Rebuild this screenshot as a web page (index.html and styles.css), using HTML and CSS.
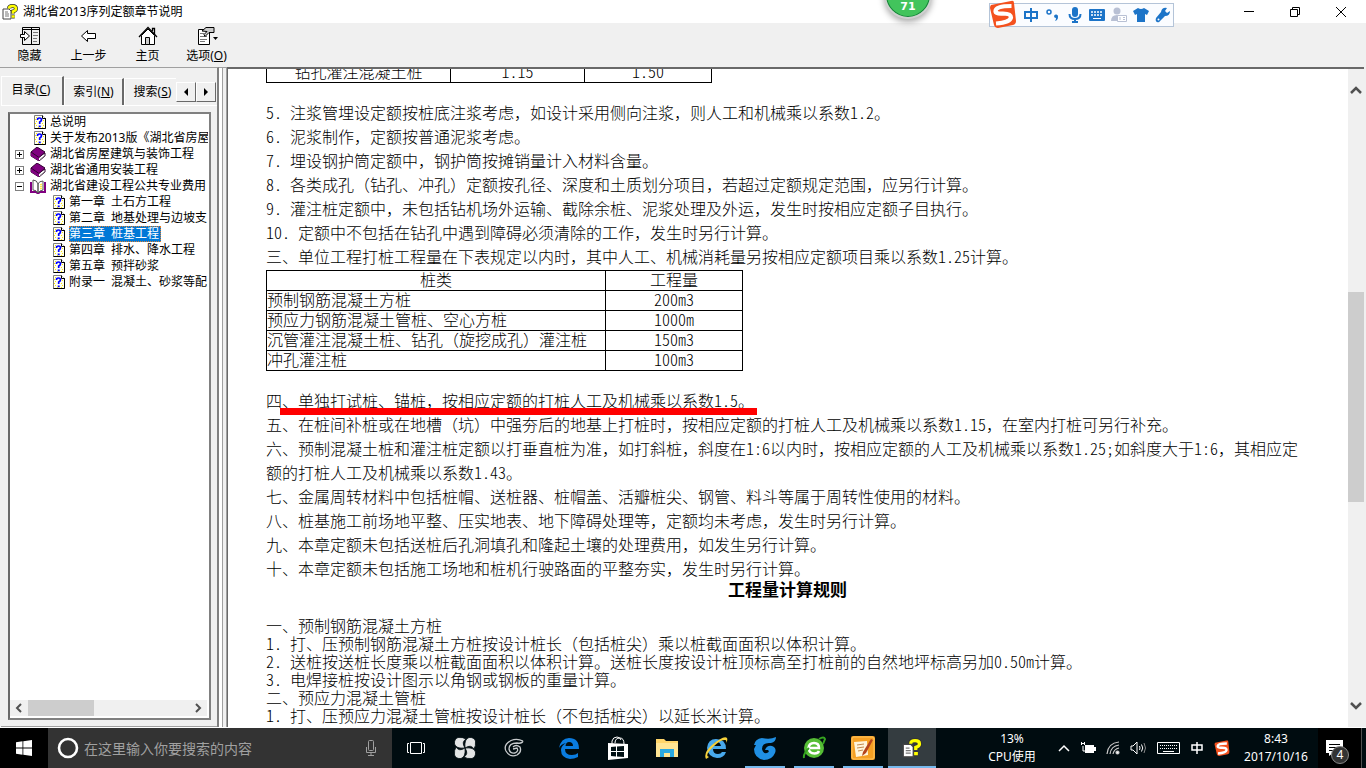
FILE: index.html
```html
<!DOCTYPE html>
<html lang="zh-CN">
<head>
<meta charset="utf-8">
<title>湖北省2013序列定额章节说明</title>
<link rel="stylesheet" href="styles.css">
</head>
<body>
<svg class="defs" aria-hidden="true">
  <symbol id="topic" viewBox="0 0 12 14">
    <path d="M0.5 0.5h8l3 3v10h-11z" fill="#fffff0" stroke="#808080"/>
    <path d="M11.5 3v10.500h-11" fill="none" stroke="#000"/>
    <path d="M8.500 0.500v3h3" fill="#fff" stroke="#000"/>
    <path d="M2 2.500h1M1 4.500h1M2 6.500h1M1 8.500h1M2 10.500h1M4 12.500h1M9 5.500h1M8 8.500h1M9 10.500h1M8 12.500h1" stroke="#ffe800"/>
    <path d="M3.500 5V4.500Q3.500 3 5.500 3T7.500 4.700Q7.500 6 5.700 7V9M4.700 11.300h2" fill="none" stroke="#00f" stroke-width="1.700"/>
  </symbol>
  <symbol id="book" viewBox="0 0 16 14">
    <path d="M1 5v4l8 5 6-5V6l-6 4z" fill="#fff" stroke="#300030"/>
    <path d="M1 5 9 10.500V14L1 9z" fill="#800080"/>
    <path d="M1 5 7 0l8 5-6 5.500z" fill="#800080" stroke="#300030"/>
    <path d="M10 12.500l5-4" stroke="#888"/>
  </symbol>
  <symbol id="book-open" viewBox="0 0 16 15">
    <path d="M1 3v10h5l2 1.500 2-1.500h5V3" fill="#fff" stroke="#800080" stroke-width="2"/>
    <path d="M3 1q4 0 5 4v9q-1.500-3-5-3zM13 2q-4 0-5 3v9q2-3 5-3z" fill="#fff" stroke="#555"/>
    <path d="M10 6l2-1M10 8l2-1M10 10l2-1" stroke="#ffe800"/>
  </symbol>
  <symbol id="help" viewBox="0 0 16 16">
    <path d="M1 5h6l2 2v8H1z" fill="#fff" stroke="#444"/>
    <path d="M3 8h3M3 10h4M3 12h4" stroke="#777"/>
    <path d="M7 4.500Q7 2 10.500 2T14 4.700Q14 6.500 11 7.500V9.500M9.700 12.500h3" fill="none" stroke="#333" stroke-width="4"/>
    <path d="M7 4.500Q7 2 10.500 2T14 4.700Q14 6.500 11 7.500V9.500M9.700 12.500h3" fill="none" stroke="#ff0" stroke-width="2.600"/>
  </symbol>
  <symbol id="sogou" viewBox="0 0 28 28">
    <path d="M2 5 22 1q3-1 3 2l2 18q0 3-3 4L9 28q-3 0-4-3L1 8q0-2 1-3z" fill="#f4511e"/>
    <path d="M22.500 6Q6 6 6.500 11.500 7 14 14 13.500q8 0 8 4Q21 22.500 7 23.500" fill="none" stroke="#fff" stroke-width="4.200"/>
  </symbol>
</svg>

<header class="titlebar">
  <svg class="app-icon" width="16" height="16"><use href="#help"/></svg>
  <h1 class="title">湖北省2013序列定额章节说明</h1>
  <div class="window-buttons">
    <button aria-label="最小化"><svg width="12" height="12"><path d="M1 5.500h10" stroke="#000"/></svg></button>
    <button aria-label="还原"><svg width="12" height="12" fill="none" stroke="#000"><path d="M1.500 3.500h7v7h-7zM3.500 3V1.500h7v7H9"/></svg></button>
    <button aria-label="关闭"><svg width="12" height="12"><path d="M1 1l10 10M11 1 1 11" stroke="#000"/></svg></button>
  </div>
</header>

<div class="speed-ball">71</div>
<div class="ime-bar">
  <svg class="ime-logo" width="28" height="28"><use href="#sogou"/></svg>
  <svg width="16" height="16" fill="none" stroke="#1c74c8" stroke-width="2"><path d="M2 5h12v6H2zM8 1v14"/></svg>
  <svg width="16" height="16"><circle cx="4" cy="5" r="2" fill="none" stroke="#1c74c8" stroke-width="1.500"/><path d="M9 9a2 2 0 1 1 4 1q0 3-3 4 1-1 1-3-2 0-2-2z" fill="#1c74c8"/></svg>
  <svg width="16" height="16"><rect x="5" y="0" width="6" height="10" rx="3" fill="#1c74c8"/><path d="M2.500 7q0 5 5.500 5t5.500-5M8 12v3M5 15h6" fill="none" stroke="#1c74c8" stroke-width="2"/></svg>
  <svg width="16" height="16"><rect y="2" width="16" height="12" rx="1" fill="#1c74c8"/><path d="M2 5h12M2 8h12" stroke="#fff" stroke-width="1.500" stroke-dasharray="2 1"/><path d="M4 11.500h8" stroke="#fff"/></svg>
  <svg width="16" height="16"><circle cx="6" cy="4" r="3.500" fill="#b8c0d4"/><path d="M0 14q0-6 6-6t6 6z" fill="#b8c0d4"/><path d="M6.500 8.500h9v6h-9zM9 10v3M12 10.500h2M12 12.500h2" fill="#fff" stroke="#b8c0d4"/></svg>
  <svg width="16" height="16"><path d="M5 1q3 2 6 0l5 3-2 4-2-1v8H4V7L2 8 0 4z" fill="#1c74c8"/></svg>
  <svg width="16" height="16"><path d="M15 4l-3 2-2-2 2-3q-5-1-6 4L1 11q-1 3 1 4 2 1 3-1l5-5q5 0 5-5z" fill="#1c74c8"/><circle cx="3.500" cy="12.500" r="1" fill="#fff"/></svg>
</div>

<nav class="toolbar">
  <button>
    <svg width="20" height="20" fill="none" stroke="#000"><path d="M2.500 1.500h17v17h-17zM11.500 2v16M2 3.500h17"/><path d="M13 6.500h5M13 9.500h5M13 12.500h4M13 15.500h4" stroke="#777"/><path d="M0.500 8.500h4v-3l5 4.500-5 4.500v-3h-4z" fill="#fff"/></svg>
    <span>隐藏</span>
  </button>
  <button>
    <svg width="20" height="20"><path d="M2.500 10 8.500 4.500v3h8v5h-8v3z" fill="#fff" stroke="#000"/></svg>
    <span>上一步</span>
  </button>
  <button>
    <svg width="20" height="20" stroke="#000"><path d="M3.500 9.500v9h13v-9L10 3z" fill="#fff"/><path d="M1 11 10 1.500l9 9.500M14.500 5V2.500h2V8" fill="none" stroke-width="1.300"/><path d="M7.500 11.500h4v7h-4z" fill="#ccc"/></svg>
    <span>主页</span>
  </button>
  <button>
    <svg width="22" height="20" fill="none" stroke="#000"><path d="M2.500 3.500h11v15h-11z" fill="#fff"/><path d="M4 7.500h4M4 10.500h7M4 13.500h7M4 15.500h5" stroke="#777"/><path d="M6 5 10 1.500h8v5h-5l-4 4-1-2 3-3z" fill="#ccc"/><path d="M17 11h5l-2.500 3z" fill="#000" stroke="none"/></svg>
    <span>选项(<u>O</u>)</span>
  </button>
</nav>

<main class="workspace">
  <aside class="sidebar">
    <div class="tabs" role="tablist">
      <button class="tab tab-active" role="tab" aria-selected="true">目录(<u>C</u>)</button>
      <button class="tab" role="tab">索引(<u>N</u>)</button>
      <button class="tab tab-cut" role="tab">搜索(<u>S</u>)</button>
      <button class="spin" aria-label="向左"><svg width="6" height="8"><path d="M5 0v8L1 4z"/></svg></button>
      <button class="spin" aria-label="向右"><svg width="6" height="8"><path d="M1 0v8l4-4z"/></svg></button>
    </div>
    <div class="tab-page">
      <div class="tree-box">
        <ul class="tree">
          <li class="top-topic"><svg width="12" height="14"><use href="#topic"/></svg><span>总说明</span></li>
          <li class="top-topic"><svg width="12" height="14"><use href="#topic"/></svg><span>关于发布2013版《湖北省房屋</span></li>
          <li><button class="toggle" aria-label="展开"><svg width="7" height="7"><path d="M1 3.500h5M3.500 1v5" stroke="#000"/></svg></button><svg width="16" height="14"><use href="#book"/></svg><span>湖北省房屋建筑与装饰工程</span></li>
          <li><button class="toggle" aria-label="展开"><svg width="7" height="7"><path d="M1 3.500h5M3.500 1v5" stroke="#000"/></svg></button><svg width="16" height="14"><use href="#book"/></svg><span>湖北省通用安装工程</span></li>
          <li><button class="toggle" aria-label="折叠"><svg width="7" height="7"><path d="M1 3.500h5" stroke="#000"/></svg></button><svg width="16" height="15"><use href="#book-open"/></svg><span>湖北省建设工程公共专业费用</span></li>
          <li class="sub-topic"><svg width="12" height="14"><use href="#topic"/></svg><span>第一章&ensp;土石方工程</span></li>
          <li class="sub-topic"><svg width="12" height="14"><use href="#topic"/></svg><span>第二章&ensp;地基处理与边坡支</span></li>
          <li class="sub-topic"><svg width="12" height="14"><use href="#topic"/></svg><span class="selected">第三章&ensp;桩基工程</span></li>
          <li class="sub-topic"><svg width="12" height="14"><use href="#topic"/></svg><span>第四章&ensp;排水、降水工程</span></li>
          <li class="sub-topic"><svg width="12" height="14"><use href="#topic"/></svg><span>第五章&ensp;预拌砂浆</span></li>
          <li class="sub-topic"><svg width="12" height="14"><use href="#topic"/></svg><span>附录一&ensp;混凝土、砂浆等配</span></li>
        </ul>
        <div class="hscroll">
          <button aria-label="向左滚动"><svg width="8" height="10"><path d="M6 1 2 5l4 4" fill="none" stroke="#505050" stroke-width="2"/></svg></button>
          <div class="htrack"><div class="hthumb"></div></div>
          <button aria-label="向右滚动"><svg width="8" height="10"><path d="M2 1l4 4-4 4" fill="none" stroke="#505050" stroke-width="2"/></svg></button>
        </div>
      </div>
    </div>
  </aside>
  <div class="splitter"></div>
  <section class="viewer">
    <article class="document">
      <table class="grid grid-upper">
        <tr><td>钻孔灌注混凝土桩</td><td><span class="num">1.15</span></td><td><span class="num">1.50</span></td></tr>
      </table>
      <div class="clauses clauses-first">
        <p><span class="num">5. </span>注浆管埋设定额按桩底注浆考虑，如设计采用侧向注浆，则人工和机械乘以系数<span class="num">1.2</span>。</p>
        <p><span class="num">6. </span>泥浆制作，定额按普通泥浆考虑。</p>
        <p><span class="num">7. </span>埋设钢护筒定额中，钢护筒按摊销量计入材料含量。</p>
        <p><span class="num">8. </span>各类成孔（钻孔、冲孔）定额按孔径、深度和土质划分项目，若超过定额规定范围，应另行计算。</p>
        <p><span class="num">9. </span>灌注桩定额中，未包括钻机场外运输、截除余桩、泥浆处理及外运，发生时按相应定额子目执行。</p>
        <p><span class="num">10. </span>定额中不包括在钻孔中遇到障碍必须清除的工作，发生时另行计算。</p>
        <p>三、单位工程打桩工程量在下表规定以内时，其中人工、机械消耗量另按相应定额项目乘以系数<span class="num">1.25</span>计算。</p>
      </div>
      <table class="grid grid-piles">
        <tr><th>桩类</th><th>工程量</th></tr>
        <tr><td>预制钢筋混凝土方桩</td><td><span class="num">200m3</span></td></tr>
        <tr><td>预应力钢筋混凝土管桩、空心方桩</td><td><span class="num">1000m</span></td></tr>
        <tr><td>沉管灌注混凝土桩、钻孔（旋挖成孔）灌注桩</td><td><span class="num">150m3</span></td></tr>
        <tr><td>冲孔灌注桩</td><td><span class="num">100m3</span></td></tr>
      </table>
      <div class="clauses clauses-second">
        <p>四<span class="marked">、单独打试桩、锚桩，按相应定额的打桩人工及机械乘以系数<span class="num">1.5</span>。</span></p>
        <p>五、在桩间补桩或在地槽（坑）中强夯后的地基上打桩时，按相应定额的打桩人工及机械乘以系数<span class="num">1.15</span>，在室内打桩可另行补充。</p>
        <p>六、预制混凝土桩和灌注桩定额以打垂直桩为准，如打斜桩，斜度在<span class="num">1:6</span>以内时，按相应定额的人工及机械乘以系数<span class="num">1.25;</span>如斜度大于<span class="num">1:6</span>，其相应定额的打桩人工及机械乘以系数<span class="num">1.43</span>。</p>
        <p>七、金属周转材料中包括桩帽、送桩器、桩帽盖、活瓣桩尖、钢管、料斗等属于周转性使用的材料。</p>
        <p>八、桩基施工前场地平整、压实地表、地下障碍处理等，定额均未考虑，发生时另行计算。</p>
        <p>九、本章定额未包括送桩后孔洞填孔和隆起土壤的处理费用，如发生另行计算。</p>
        <p>十、本章定额未包括施工场地和桩机行驶路面的平整夯实，发生时另行计算。</p>
      </div>
      <h2>工程量计算规则</h2>
      <div class="rules">
        <p>一、预制钢筋混凝土方桩</p>
        <p><span class="num">1. </span>打、压预制钢筋混凝土方桩按设计桩长（包括桩尖）乘以桩截面面积以体积计算。</p>
        <p><span class="num">2. </span>送桩按送桩长度乘以桩截面面积以体积计算。送桩长度按设计桩顶标高至打桩前的自然地坪标高另加<span class="num">0.50m</span>计算。</p>
        <p><span class="num">3. </span>电焊接桩按设计图示以角钢或钢板的重量计算。</p>
        <p>二、预应力混凝土管桩</p>
        <p><span class="num">1. </span>打、压预应力混凝土管桩按设计桩长（不包括桩尖）以延长米计算。</p>
      </div>
    </article>
    <div class="vscroll">
      <button aria-label="向上滚动"><svg width="12" height="8"><path d="M1 7l5-5 5 5" fill="none" stroke="#505050" stroke-width="2.500"/></svg></button>
      <div class="gap-above"></div>
      <div class="vthumb"></div>
      <div class="gap-below"></div>
      <button aria-label="向下滚动"><svg width="12" height="8"><path d="M1 1l5 5 5-5" fill="none" stroke="#505050" stroke-width="2.500"/></svg></button>
    </div>
  </section>
</main>

<footer class="taskbar">
  <button class="start" aria-label="开始"><svg width="16" height="16" fill="#fff"><path d="M0 2.300 6.500 1.300V7.600H0zM7.300 1.200 16 0v7.600H7.300zM0 8.400h6.500v6.300L0 13.700zM7.300 8.400H16V16l-8.700-1.200z"/></svg></button>
  <div class="search">
    <svg width="22" height="22"><circle cx="11" cy="11" r="9" fill="none" stroke="#fff" stroke-width="2.600"/></svg>
    <input type="text" aria-label="搜索" placeholder="在这里输入你要搜索的内容">
    <svg width="12" height="18" fill="none" stroke="#a0a0a0"><rect x="3.500" y="1.500" width="5" height="10" rx="1"/><path d="M1.500 8v5.500h9V8M6 14v2.500M3 16.500h6"/></svg>
  </div>
  <div class="apps">
    <button aria-label="任务视图"><svg width="20" height="14" fill="none" stroke="#fff"><path d="M4.500 1.500h11v11h-11zM3 2.500H1.500v9H3M17 2.500h1.500v9H17"/></svg></button>
    <button aria-label="花瓣"><svg width="24" height="24" fill="#e4e6e6" stroke="#000c10" stroke-width=".8"><path id="petal" d="M12 12Q3 13 1.500 8 1 3 5 1.500 10 1 13 3 8 6 12 12z"/><use href="#petal" transform="rotate(90 12 12)"/><use href="#petal" transform="rotate(180 12 12)"/><use href="#petal" transform="rotate(270 12 12)"/></svg></button>
    <button aria-label="旋风"><svg width="20" height="20" fill="none" stroke="#c8ccce" stroke-width="1.300"><path d="M19 3Q13 0 7 2.500-1 7 2 13q4 7 11 4 5-3 3-8-4-3-7 0M19 3q-1 3-6 2-8 0-8 6 1 5 6 4 4-2 2-5l-4 1"/></svg></button>
    <button class="edge" aria-label="Edge"><svg width="20" height="22"><path d="M0 11Q2 1 10 1q10 0 10 11H6q0 6 7 6 4 0 6-2v4q-4 2-8 2Q2 21 2 13q0-4 5-7-5 1-7 5zM6.500 9H14q0-4-4-4-3 0-3.500 4z" fill="#0a7ce0"/></svg></button>
    <button aria-label="应用商店"><svg width="22" height="24"><path d="M5 8V5q1-4 5-4 3 0 4 3M8 7q0-5 5-5 4 0 4 6" fill="none" stroke="#fff"/><path d="M1 7l20 1v14L1 24z" fill="#fff"/><path d="M4 11l5-.5v4.500H4zM10 10.500l7-.5v5h-7zM4 16h5v4.500L4 20zM10 16h7v5l-7-.5z" fill="#001014"/></svg></button>
    <button aria-label="文件资源管理器"><svg width="22" height="20"><path d="M0 1h8l2 2h12v16H0z" fill="#ffd56a"/><path d="M0 5h22v14H0z" fill="#ffe594"/><path d="M4 19v-8h14v8h-4v-4H8v4z" fill="#2aa8e0"/></svg></button>
    <button aria-label="Internet Explorer"><svg width="24" height="24"><path d="M3 12Q4 3 12 3q10 0 10 10H9q0 5 5 5 3 0 4-2h4q-2 6-9 6-9-1-10-10zM9 10h8q-1-4-4-4t-4 4z" fill="#48a9ec"/><path d="M2 23Q-1 17 8 9 20-1 23 2q1 2-1 5 1-3-1-3Q17 3 9 11 0 20 5 21z" fill="#f6d23c"/></svg></button>
    <button class="running" aria-label="广联达"><svg width="24" height="24"><path d="M23 1q0 5-5 6-9-1-9 6 1 5 5 4 3-1 1-3l-3 0q2-5 7-4 5 2 3 7-3 7-11 7Q1 22 1 13L3 9H1Q2 3 9 2q8 2 14-1z" fill="#2090e4"/></svg></button>
    <button class="running" aria-label="360浏览器"><svg width="24" height="24"><circle cx="12" cy="12" r="10" fill="#55bd35"/><path d="M7 12h10q0-5-5-5t-5.500 5q.5 5.500 6 5.500 3.500 0 4.500-2.500" fill="none" stroke="#fff" stroke-width="2.500"/><path d="M2 22Q1 18 7 12M17 3q5-3 6 0l-2 5" fill="none" stroke="#35a420" stroke-width="2"/></svg></button>
    <button class="running" aria-label="编辑器"><svg width="24" height="24"><rect width="24" height="24" rx="2" fill="#f5a024"/><rect x="1" y="1" width="22" height="22" rx="2" fill="none" stroke="#ffc45c"/><path d="M3 6l13-1 1 14-12 2z" fill="#fff5dc"/><path d="M6 9l7-1M6 12l7-1M7 15l5-1" stroke="#c38a50"/><path d="M20 3 12 16l-1 4 4-3L22 4z" fill="#b5441c"/></svg></button>
    <button class="running current" aria-label="帮助"><svg width="20" height="22" viewBox="0 0 16 16"><use href="#help"/></svg></button>
  </div>
  <div class="cpu"><span>13%</span><span>CPU使用</span></div>
  <div class="tray">
    <svg width="12" height="8"><path d="M1 7l5-5 5 5" fill="none" stroke="#fff" stroke-width="1.500"/></svg>
    <svg width="16" height="14"><path d="M5 4h9v2h2v4h-2v2H5z" fill="#fff"/><path d="M1 2.500h4M1.500 1v3M4.500 1v3M3 5v5h2" fill="none" stroke="#fff"/></svg>
    <svg width="14" height="14" fill="none" stroke="#ccc" stroke-width="1.200"><path d="M1 13Q2 2 13 1M4 13q1-8 9-9M7 13q1-5 6-6"/><circle cx="11.500" cy="11.500" r="1.500" fill="#fff"/></svg>
    <svg width="17" height="14" fill="none" stroke="#fff"><path d="M1 5h2l4-4v12L3 9H1zM9.500 5q1 2 0 4M11.500 3.500q2.500 3.500 0 7"/><path d="M14 2q3 5 0 10" stroke="#888"/></svg>
    <svg width="23" height="14" fill="none" stroke="#fff"><path d="M.5 1.500h22v11H.5z"/><path d="M3 4.500h18M3 7.500h18" stroke-dasharray="1 1"/><path d="M6 10.500h11"/></svg>
    <svg width="14" height="14" fill="none" stroke="#fff" stroke-width="1.500"><path d="M2 4h10v5H2zM7 1v12"/></svg>
    <svg width="16" height="16" viewBox="0 0 28 28"><use href="#sogou"/></svg>
  </div>
  <div class="clock"><span>8:43</span><span>2017/10/16</span></div>
  <button class="notices" aria-label="操作中心"><svg width="18" height="16"><path d="M0 0h17v13H7l-4 3v-3H0z" fill="#fff"/><path d="M3 4.500h11M3 7.500h11M3 10.500h7" stroke="#000"/></svg><span class="badge">4</span></button>
</footer>
</body>
</html>
```
FILE: styles.css
```css
* { box-sizing: border-box; }
body {
  margin: 0;
  height: 100vh;
  display: flex;
  flex-direction: column;
  overflow: hidden;
  background: #f0f0f0;
  color: #000;
  font: 12px/16px "Noto Sans", "Noto Sans CJK SC", sans-serif;
}
button {
  margin: 0;
  padding: 0;
  border: 0;
  background: none;
  color: inherit;
  font: inherit;
}
svg { display: block; flex: none; }
.defs { position: absolute; width: 0; height: 0; }
h1, h2, p, ul { margin: 0; padding: 0; }

.titlebar {
  flex: none;
  height: 23px;
  display: flex;
  align-items: center;
  gap: 5px;
  padding-left: 2px;
  background: #fff;
}
.title { flex: 1; font-size: 12px; font-weight: 400; }
.window-buttons { display: flex; padding-right: 2px; }
.window-buttons button { width: 46px; height: 20px; display: grid; place-items: center; }

.speed-ball {
  position: absolute;
  left: 884px;
  top: -29px;
  width: 48px;
  height: 48px;
  padding-top: 24px;
  border: 2px solid #d0d0d0;
  border-radius: 50%;
  background: #42c45c;
  box-shadow: inset 0 0 0 1px #16803a, 0 3px 6px #aaa;
  color: #fff;
  font: bold 11px/20px "DejaVu Sans", sans-serif;
  text-align: center;
}
.ime-bar {
  position: absolute;
  left: 989px;
  top: 3px;
  width: 185px;
  height: 24px;
  display: flex;
  align-items: center;
  gap: 6px;
  border: 1px solid #b4c4d8;
  background: #fafcff;
}
.ime-logo { margin: -2px 0 0 -1px; }

.toolbar {
  flex: none;
  height: 44px;
  display: flex;
  background: #f0f0f0;
}
.toolbar button {
  width: 59px;
  padding-top: 3px;
  display: flex;
  flex-direction: column;
  align-items: center;
  gap: 2px;
}

.workspace { flex: 1; min-height: 0; display: flex; border-bottom: 1px solid #fff; }
.sidebar {
  flex: none;
  width: 219px;
  display: flex;
  flex-direction: column;
  padding: 8px 0 0 1px;
  border-top: 1px solid #a0a0a0;
  border-right: 2px solid #808080;
}
.tabs { flex: none; display: flex; align-items: flex-end; height: 29px; }
.tab {
  flex: none;
  width: 60px;
  height: 27px;
  border: solid #fff;
  border-width: 1px 0 0 1px;
  border-right: 2px solid #696969;
}
.tab-active { width: 63px; height: 29px; padding: 0 2px 3px 0; }
.tab-cut { width: 52px; padding-left: 4px; border-right: 0; white-space: nowrap; }
.spin {
  flex: none;
  width: 20px;
  height: 20px;
  margin-bottom: 3px;
  display: grid;
  place-items: center;
  border: 1px solid;
  border-color: #fff #696969 #696969 #fff;
}
.tab-page { flex: 1; min-height: 0; display: flex; padding: 6px 6px 6px 7px; border-top: 1px solid #fff; border-bottom: 1px solid #a0a0a0; }
.tree-box {
  flex: 1;
  min-width: 0;
  display: flex;
  flex-direction: column;
  border: 2px solid #808080;
  border-left-color: #696969;
  background: #fff;
}
.tree { flex: 1; min-height: 0; margin-right: 1px; overflow: hidden; list-style: none; white-space: nowrap; text-spacing-trim: space-all; }
.tree li { height: 16px; display: flex; align-items: center; gap: 4px; padding-left: 5px; }
.tree .top-topic { padding-left: 24px; }
.tree .sub-topic { padding-left: 43px; }
.toggle { width: 9px; height: 9px; margin-right: 2px; border: 1px solid #808080; display: grid; place-items: center; }
.selected { height: 16px; padding-right: 2px; background: #0078d7; color: #fff; outline: 1px dotted #e08030; outline-offset: -1px; }
.hscroll { flex: none; height: 16px; margin: 0 2px 2px 0; display: flex; background: #f0f0f0; }
.hscroll button { width: 18px; display: grid; place-items: center; }
.htrack { flex: 1; }
.hthumb { width: 41%; height: 100%; background: #cdcdcd; }
.splitter { flex: none; width: 8px; border-top: 1px solid #a0a0a0; border-right: 1px solid #a0a0a0; box-shadow: inset 3px 0 #fff, inset 4px 0 #a0a0a0; }

.viewer {
  flex: 1;
  min-width: 0;
  display: flex;
  margin-right: 2px;
  border: solid #696969;
  border-width: 2px 0 0 1px;
  background: #fff;
}
.document {
  flex: 1;
  min-width: 0;
  overflow: hidden;
  padding: 0 39px 0 38px;
  font: 16px/24px "Liberation Sans", "Noto Sans CJK SC", sans-serif;
  font-weight: 300;
  text-spacing-trim: space-all;
}
.num {
  font-family: "Noto Sans CJK SC", sans-serif;
  font-feature-settings: "hwid";
  line-height: 0;
  white-space: pre;
}
.grid { border-collapse: collapse; table-layout: fixed; line-height: 19px; }
.grid td, .grid th { height: 20px; padding: 0; border: 1px solid #000; font-weight: inherit; text-align: center; }
.grid-upper { width: 446px; margin-top: -7px; }
.grid-upper td:first-child { width: 184px; }
.grid-upper td:nth-child(2) { width: 134px; }
.grid-piles { width: 477px; }
.grid-piles th:first-child { width: 339px; }
.grid-piles td:first-child { text-align: left; }
.clauses-first { margin-top: 19px; }
.clauses-second { margin-top: 19px; }
.marked { position: relative; }
.marked::after {
  content: "";
  position: absolute;
  left: -2px;
  right: -3px;
  bottom: -5px;
  height: 7px;
  background: #f00;
}
.document h2 { font-size: 17px; line-height: 18px; font-weight: 700; text-align: center; }
.rules { margin-top: 18px; line-height: 18px; }
.vscroll { flex: none; width: 16px; display: flex; flex-direction: column; background: #f0f0f0; }
.vscroll button { height: 42px; display: grid; place-items: center; }
.gap-above { flex: 181; }
.vthumb { flex: 209; background: #cdcdcd; }
.gap-below { flex: 183; }

.taskbar { flex: none; height: 40px; display: flex; background: #000c10; color: #fff; }
.start { width: 48px; display: grid; place-items: center; background: #000; }
.search { width: 344px; display: flex; align-items: center; gap: 5px; padding: 0 15px 0 9px; background: #333; }
.search input { flex: 1; min-width: 0; padding: 0; border: 0; outline: 0; background: none; color: #fff; font: 14px/20px "Noto Sans CJK SC", sans-serif; }
.search input::placeholder { color: #a0a0a0; opacity: 1; }
.apps { display: flex; gap: 1px; }
.apps button { width: 48px; display: grid; place-items: center; position: relative; }
.apps .edge { margin-left: 6px; }
.running::after { content: ""; position: absolute; bottom: 0; left: 4px; right: 4px; height: 2px; background: #76b9ed; }
.current { background: #343c40; }
.current::after { left: 0; right: 0; }
.cpu, .clock { display: flex; flex-direction: column; align-items: center; justify-content: center; line-height: 18px; }
.cpu { margin-left: auto; width: 62px; margin-right: 2px; }
.tray { display: flex; align-items: center; gap: 10px; padding: 0 4px 0 13px; }
.clock { width: 84px; }
.notices { width: 44px; margin-right: 4px; padding-right: 10px; display: grid; place-items: center; position: relative; border-right: 1px solid #505050; background: #000; }
.badge { position: absolute; left: 13px; top: 18px; width: 18px; height: 18px; border: 1px solid #888; border-radius: 50%; background: #333; line-height: 16px; }
```
